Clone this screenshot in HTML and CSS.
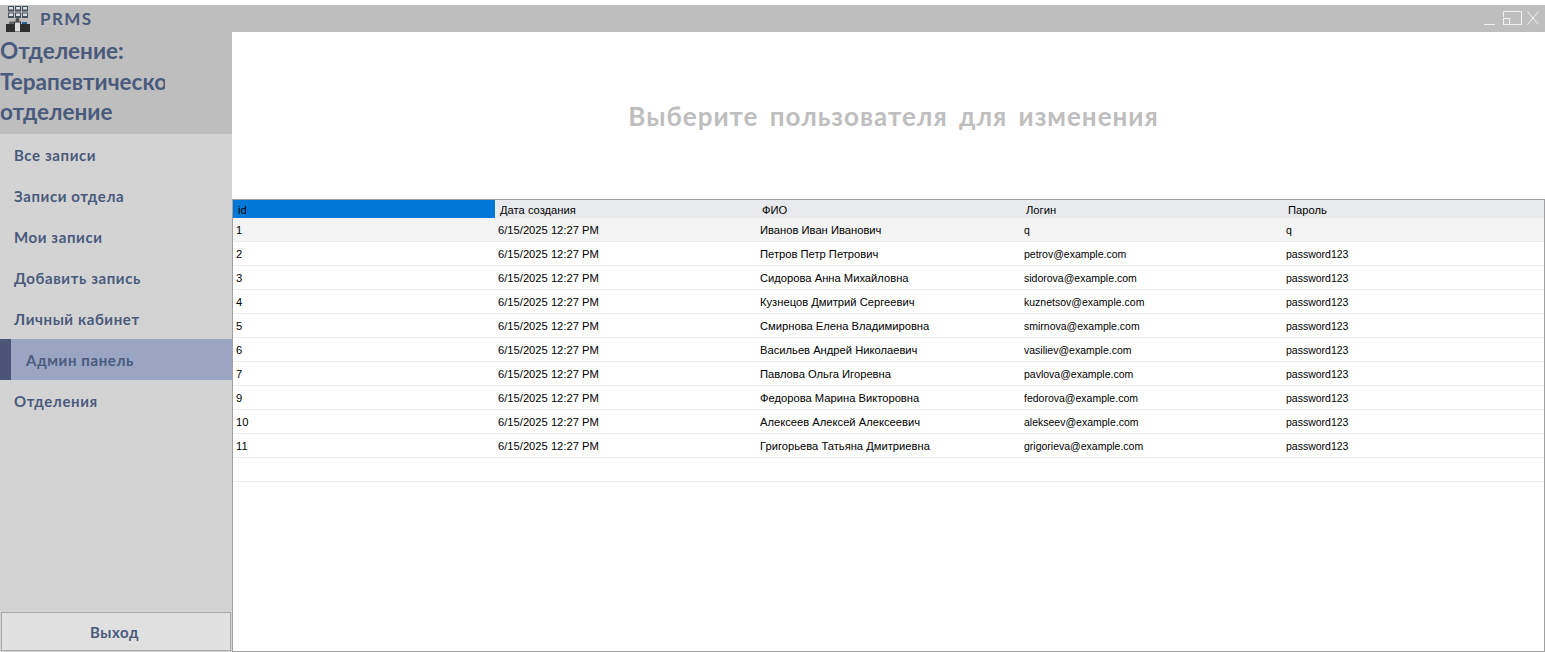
FILE: index.html
```html
<!DOCTYPE html>
<html lang="ru">
<head>
    <meta charset="UTF-8">
    <meta name="viewport" content="width=device-width, initial-scale=1.0">
    <title>PRMS</title>
    <link rel="stylesheet" href="styles.css">
</head>
<body>
    <div class="titlebar">
        <svg class="logo" width="24" height="26" viewBox="0 0 24 26">
            <g fill="#46525c">
                <rect x="2" y="0" width="6" height="5.5"/>
                <rect x="9" y="0" width="6" height="5.5"/>
                <rect x="16" y="0" width="6" height="5.5"/>
                <rect x="2" y="6.5" width="6" height="5.5"/>
                <rect x="9" y="6.5" width="6" height="5.5"/>
                <rect x="16" y="6.5" width="6" height="5.5"/>
            </g>
            <g fill="#d5e0e4">
                <rect x="3" y="1" width="4" height="2.5"/>
                <rect x="10" y="1" width="4" height="2.5"/>
                <rect x="17" y="1" width="4" height="2.5"/>
                <rect x="3" y="7.5" width="4" height="2.5"/>
                <rect x="10" y="7.5" width="4" height="2.5"/>
                <rect x="17" y="7.5" width="4" height="2.5"/>
            </g>
            <rect x="0" y="18" width="24" height="8" fill="#2e2e2e"/>
            <rect x="3" y="15.5" width="5" height="2.5" fill="#666"/>
            <rect x="16" y="16" width="5" height="2" fill="#2a5c9c"/>
            <circle cx="11.5" cy="14" r="2" fill="#4a4a4a"/>
            <rect x="8.5" y="16" width="6" height="10" fill="#dcdcdc" stroke="#333"/>
        </svg>
        <span class="app-name">PRMS</span>
        <div class="window-btns">
            <svg class="win-min" width="11" height="14" viewBox="0 0 11 14"><path d="M0 13.5H11" stroke="#f2f2f2"/></svg>
            <svg class="win-max" width="19" height="14" viewBox="0 0 19 14" fill="none" stroke="#f2f2f2"><path d="M0.5 6V0.5H18.5V13.5H7"/><rect x="0.5" y="7.5" width="6" height="6"/></svg>
            <svg width="12" height="14" viewBox="0 0 12 14" fill="none" stroke="#f2f2f2"><path d="M0.5 0.5L11.5 13.5M11.5 0.5L0.5 13.5"/></svg>
        </div>
    </div>

    <div class="main">
        <div class="sidebar">
            <div class="dept">
                <div class="dept-line">Отделение:</div>
                <div class="dept-line">Терапевтическое</div>
                <div class="dept-line">отделение</div>
            </div>
            <div class="nav">
                <div class="nav-item">Все записи</div>
                <div class="nav-item">Записи отдела</div>
                <div class="nav-item">Мои записи</div>
                <div class="nav-item">Добавить запись</div>
                <div class="nav-item">Личный кабинет</div>
                <div class="nav-item active">Админ панель</div>
                <div class="nav-item">Отделения</div>
            </div>
            <button class="exit-btn">Выход</button>
        </div>

        <div class="content">
            <div class="heading">Выберите пользователя для изменения</div>
            <div class="grid-wrap">
                <table class="grid">
                    <thead>
                        <tr>
                            <th class="selected">id</th>
                            <th>Дата создания</th>
                            <th>ФИО</th>
                            <th>Логин</th>
                            <th>Пароль</th>
                        </tr>
                    </thead>
                    <tbody>
                        <tr class="first"><td>1</td><td>6/15/2025 12:27 PM</td><td>Иванов Иван Иванович</td><td>q</td><td>q</td></tr>
                        <tr><td>2</td><td>6/15/2025 12:27 PM</td><td>Петров Петр Петрович</td><td>petrov@example.com</td><td>password123</td></tr>
                        <tr><td>3</td><td>6/15/2025 12:27 PM</td><td>Сидорова Анна Михайловна</td><td>sidorova@example.com</td><td>password123</td></tr>
                        <tr><td>4</td><td>6/15/2025 12:27 PM</td><td>Кузнецов Дмитрий Сергеевич</td><td>kuznetsov@example.com</td><td>password123</td></tr>
                        <tr><td>5</td><td>6/15/2025 12:27 PM</td><td>Смирнова Елена Владимировна</td><td>smirnova@example.com</td><td>password123</td></tr>
                        <tr><td>6</td><td>6/15/2025 12:27 PM</td><td>Васильев Андрей Николаевич</td><td>vasiliev@example.com</td><td>password123</td></tr>
                        <tr><td>7</td><td>6/15/2025 12:27 PM</td><td>Павлова Ольга Игоревна</td><td>pavlova@example.com</td><td>password123</td></tr>
                        <tr><td>9</td><td>6/15/2025 12:27 PM</td><td>Федорова Марина Викторовна</td><td>fedorova@example.com</td><td>password123</td></tr>
                        <tr><td>10</td><td>6/15/2025 12:27 PM</td><td>Алексеев Алексей Алексеевич</td><td>alekseev@example.com</td><td>password123</td></tr>
                        <tr><td>11</td><td>6/15/2025 12:27 PM</td><td>Григорьева Татьяна Дмитриевна</td><td>grigorieva@example.com</td><td>password123</td></tr>
                        <tr><td></td><td></td><td></td><td></td><td></td></tr>
                    </tbody>
                </table>
            </div>
        </div>
    </div>
</body>
</html>
```

FILE: styles.css
```css
html, body {
    margin: 0;
    height: 652px;
    overflow: hidden;
    background: #fff;
}
body {
    padding-top: 5px;
    box-sizing: border-box;
    display: flex;
    flex-direction: column;
    font-family: "Lato", "Liberation Sans", sans-serif;
    color: #4a5a7c;
}
.titlebar {
    height: 27px;
    flex: none;
    background: #bebebe;
    display: flex;
    align-items: center;
}
.logo {
    margin-left: 6px;
}
.app-name {
    margin-left: 10px;
    font-size: 17px;
    font-weight: 700;
    letter-spacing: 1.4px;
}
.window-btns {
    margin-left: auto;
    margin-right: 6px;
    display: flex;
    align-self: flex-start;
    padding-top: 6px;
}
.window-btns svg {
    display: block;
}
.win-min {
    margin-right: 8px;
}
.win-max {
    margin-right: 5px;
}
.main {
    flex: 1;
    display: flex;
    min-height: 0;
}
.sidebar {
    width: 232px;
    flex: none;
    background: #d3d3d3;
    display: flex;
    flex-direction: column;
}
.dept {
    height: 102px;
    background: #bebebe;
    padding-top: 4px;
    box-sizing: border-box;
}
.dept-line {
    width: 165px;
    height: 30.5px;
    line-height: 30px;
    overflow: hidden;
    white-space: nowrap;
    font-size: 22.5px;
    font-weight: 700;
}
.nav-item {
    height: 41px;
    line-height: 43px;
    padding-left: 14px;
    font-size: 15px;
    font-weight: 700;
    letter-spacing: 0.6px;
}
.nav-item.active {
    padding-left: 15px;
    border-left: 11px solid #4a5578;
    background: #9aa5c4;
}
.exit-btn {
    margin: auto 1px 1px;
    height: 39px;
    padding: 0 3px 0 0;
    border: 1px solid #a9a9a9;
    background: #e0e0e0;
    color: #4a5a7c;
    font-family: inherit;
    font-size: 15px;
    font-weight: 700;
    letter-spacing: 0.6px;
}
.content {
    flex: 1;
    min-width: 0;
    display: flex;
    flex-direction: column;
}
.heading {
    height: 167px;
    flex: none;
    display: flex;
    align-items: center;
    justify-content: center;
    padding-left: 10px;
    box-sizing: border-box;
    color: #bebebe;
    font-size: 26px;
    font-weight: 700;
    letter-spacing: 1px;
    word-spacing: 4px;
}
.grid-wrap {
    flex: 1;
    border: 1px solid #a0a0a0;
    min-height: 0;
}
.grid {
    width: 100%;
    table-layout: fixed;
    border-collapse: collapse;
    font-family: "Liberation Sans", Arial, sans-serif;
    font-size: 11.2px;
    color: #000;
}
.grid th {
    height: 18px;
    padding: 2px 0 0 5px;
    box-sizing: border-box;
    text-align: left;
    font-weight: 400;
    background: #e9eaee;
}
.grid th:nth-child(3) {
    width: 263px;
}
.grid th.selected {
    background: #0078d7;
}
.grid td {
    height: 23px;
    padding: 0 0 0 3px;
    border-bottom: 1px solid #ededed;
}
.grid td:nth-child(n+4) {
    padding-left: 4px;
    font-size: 10.5px;
}
.grid th:nth-child(n+4) {
    padding-left: 6px;
}
.grid .first td {
    background: #f4f4f4;
}
```
